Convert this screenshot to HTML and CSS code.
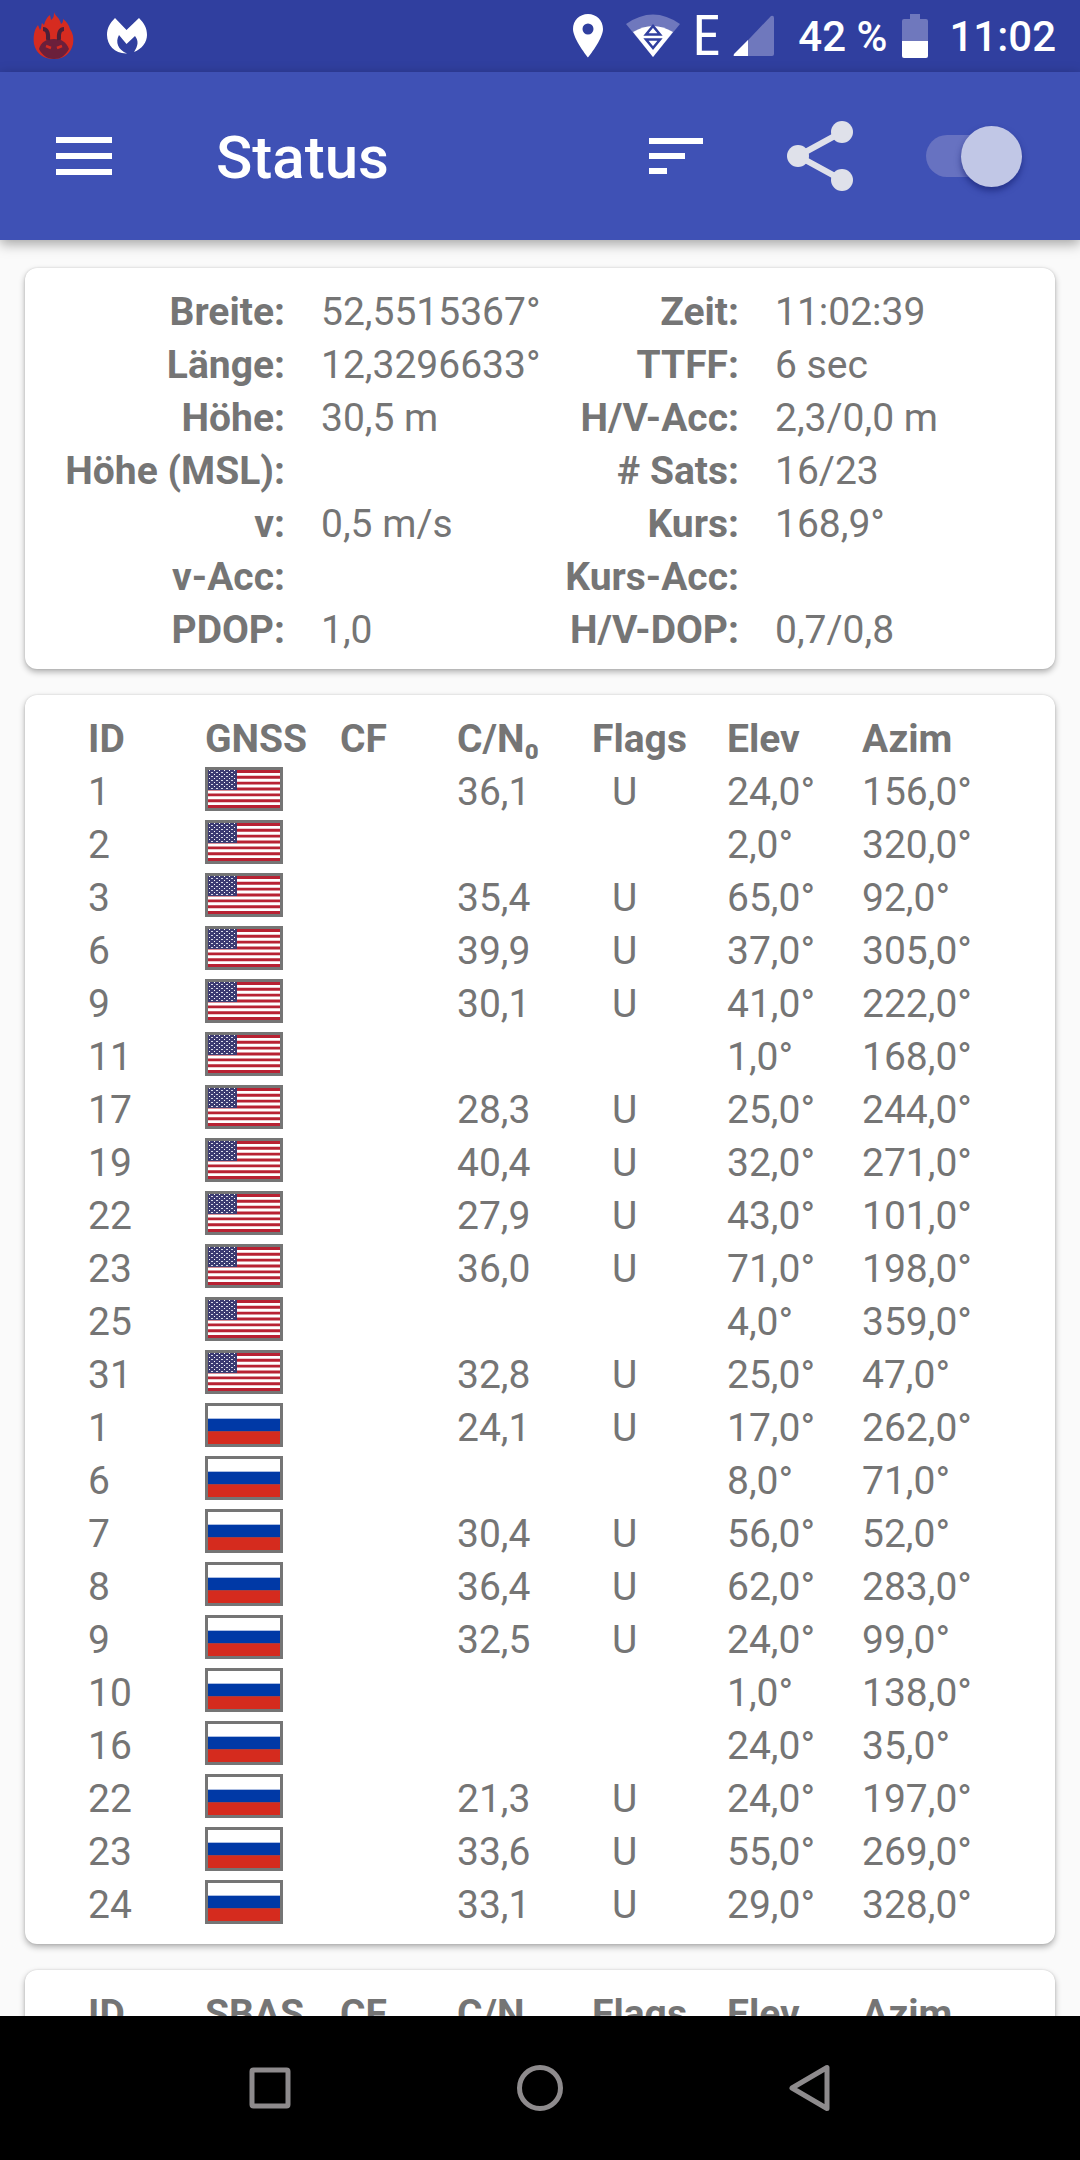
FILE: index.html
```html
<!DOCTYPE html>
<html lang="de">
<head>
<meta charset="utf-8">
<meta name="viewport" content="width=device-width, initial-scale=1">
<title>Status</title>
<link rel="stylesheet" href="styles.css">
</head>
<body>
<svg class="defs" aria-hidden="true">
  <defs>
    <pattern id="stars" width="5" height="4" patternUnits="userSpaceOnUse">
      <rect x="1" y="1" width="2" height="1" fill="#d8d8e6"/>
      <rect x="4" y="3" width="1" height="1" fill="#ffffff"/>
    </pattern>
    <symbol id="us" viewBox="0 0 78 44">
      <rect width="78" height="44" fill="#757575"/>
      <rect x="3" y="3" width="72" height="38" fill="#fff"/>
      <path d="M3 4.46h72M3 10.31h72M3 16.15h72M3 22h72M3 27.85h72M3 33.69h72M3 39.54h72" stroke="#b82233" stroke-width="2.92"/>
      <rect x="3" y="3" width="29" height="20" fill="#3c3b72"/>
      <rect x="3" y="3" width="28" height="20" fill="url(#stars)"/>
    </symbol>
    <symbol id="ru" viewBox="0 0 78 44">
      <rect width="78" height="44" fill="#757575"/>
      <rect x="3" y="3" width="72" height="13" fill="#fff"/>
      <rect x="3" y="15.67" width="72" height="12.67" fill="#0039a6"/>
      <rect x="3" y="28.33" width="72" height="12.67" fill="#d52b1e"/>
    </symbol>
  </defs>
</svg>
<div class="screen">
  <div class="statusbar">
    <div class="notifications">
      <svg width="42" height="48" viewBox="0 0 42 48" aria-hidden="true">
        <path d="M21 0C22 4 27 6 28 12C30 11 30 9 30 7C34 10 36 13 37 17C40 21 41 26 40 32C38 41 31 47 21 47C10 47 3 41 1 32C0 25 1 18 5 13L7 18C9 15 8 13 9 11L11 13C12 9 14 5 17 3L18 8C21 6 21 3 21 0Z" fill="#d62b20"/>
        <path d="M6 37C8 30 13 27 21 27C29 27 33 30 36 37C32 44 27 47 21 47C14 47 9 43 6 37Z" fill="#6b1f3b"/>
        <path d="M10 17q6 0 5 11M31 17q-6 0-5 11" fill="none" stroke="#4c2038" stroke-width="4"/>
        <path d="M13 34l5 2M29 34l-5 2" stroke="#d62b20" stroke-width="2.500"/>
      </svg>
      <svg width="42" height="38" viewBox="0 0 42 38" aria-hidden="true">
        <path d="M9 1L20.500 13L33 1C38 6 41 11 41 18C41 25 36 32 28 35C32 29 33 24 29 19L20.500 27L13 18C9 25 12 33 21 36.500C9 37 1 28 1 18C1 11 4 6 9 1Z" fill="#fff"/>
      </svg>
    </div>
    <div class="indicators">
      <svg class="pin" width="30" height="44" viewBox="0 0 30 44" aria-hidden="true">
        <path fill-rule="evenodd" d="M15 0C6.500 0 0 6.500 0 15C0 25 15 43.500 15 43.500S30 25 30 15C30 6.500 23.500 0 15 0ZM15 9.500a5.500 5.500 0 1 1 0 11a5.500 5.500 0 1 1 0-11Z" fill="#fff"/>
      </svg>
      <svg class="wifi" width="54" height="44" viewBox="0 0 54 44" aria-hidden="true">
        <path d="M27 43L0 10Q27-9 54 10Z" fill="#6f78bd"/>
        <path d="M27 43L7 18Q27 6 47 18Z" fill="#fff"/>
        <path d="M27 12L20 20.500H34ZM27 34L20 25.500H34Z" fill="#fff" stroke="#303f9f" stroke-width="2.500"/>
      </svg>
      <span class="network">E</span>
      <svg class="signal" width="41" height="42" viewBox="0 0 41 42" aria-hidden="true">
        <path d="M0 41L38 1Q41 0 41 3V39Q41 41 39 41Z" fill="#6f78bd"/>
        <path d="M15 25V41H2Q0 41 1 39Z" fill="#fff"/>
      </svg>
      <span class="percent">42 %</span>
      <svg class="battery" width="26" height="44" viewBox="0 0 26 44" aria-hidden="true">
        <path d="M8 0H18V5H24Q26 5 26 7V28H0V7Q0 5 2 5H8Z" fill="#6f78bd"/>
        <path d="M0 27H26V42Q26 44 24 44H2Q0 44 0 42Z" fill="#fff"/>
      </svg>
      <time>11:02</time>
    </div>
  </div>

  <header class="appbar">
    <button class="icon-button" type="button" aria-label="Menü">
      <svg width="56" height="38" viewBox="0 0 56 38"><path d="M0 3H56M0 19H56M0 35H56" stroke="#fff" stroke-width="6"/></svg>
    </button>
    <h1>Status</h1>
    <div class="actions">
      <button class="icon-button" type="button" aria-label="Sortieren">
        <svg width="54" height="36" viewBox="0 0 54 36"><path d="M0 3H54M0 18H36M0 33H18" stroke="#fff" stroke-width="6"/></svg>
      </button>
      <button class="icon-button" type="button" aria-label="Teilen">
        <svg width="68" height="72" viewBox="0 0 68 72">
          <path d="M56 12L12 36L56 60" fill="none" stroke="#dfe1ea" stroke-width="6"/>
          <g fill="#dfe1ea"><circle cx="56" cy="12" r="11"/><circle cx="12" cy="36" r="11"/><circle cx="56" cy="60" r="11"/></g>
        </svg>
      </button>
      <input class="switch" type="checkbox" role="switch" aria-label="GPS" checked>
    </div>
  </header>

  <main class="content">
    <section class="card">
      <table class="position">
        <colgroup><col class="p1"><col class="p2"><col class="p3"><col class="p4"></colgroup>
        <tbody>
        <tr><th>Breite:</th><td>52,5515367°</td><th>Zeit:</th><td>11:02:39</td></tr>
        <tr><th>Länge:</th><td>12,3296633°</td><th>TTFF:</th><td>6 sec</td></tr>
        <tr><th>Höhe:</th><td>30,5 m</td><th>H/V-Acc:</th><td>2,3/0,0 m</td></tr>
        <tr><th>Höhe (MSL):</th><td></td><th># Sats:</th><td>16/23</td></tr>
        <tr><th>v:</th><td>0,5 m/s</td><th>Kurs:</th><td>168,9°</td></tr>
        <tr><th>v-Acc:</th><td></td><th>Kurs-Acc:</th><td></td></tr>
        <tr><th>PDOP:</th><td>1,0</td><th>H/V-DOP:</th><td>0,7/0,8</td></tr>
        </tbody>
      </table>
    </section>

    <section class="card">
      <table class="sats">
        <colgroup><col class="narrow"><col class="wide"><col class="narrow"><col class="wide"><col class="wide"><col class="wide"><col class="wide"></colgroup>
        <thead>
        <tr><th>ID</th><th>GNSS</th><th>CF</th><th>C/N₀</th><th>Flags</th><th>Elev</th><th>Azim</th></tr>
        </thead>
        <tbody>
        <tr><td>1</td><td><svg class="flag"><use href="#us"/></svg></td><td></td><td>36,1</td><td class="used">U</td><td>24,0°</td><td>156,0°</td></tr>
        <tr><td>2</td><td><svg class="flag"><use href="#us"/></svg></td><td></td><td></td><td></td><td>2,0°</td><td>320,0°</td></tr>
        <tr><td>3</td><td><svg class="flag"><use href="#us"/></svg></td><td></td><td>35,4</td><td class="used">U</td><td>65,0°</td><td>92,0°</td></tr>
        <tr><td>6</td><td><svg class="flag"><use href="#us"/></svg></td><td></td><td>39,9</td><td class="used">U</td><td>37,0°</td><td>305,0°</td></tr>
        <tr><td>9</td><td><svg class="flag"><use href="#us"/></svg></td><td></td><td>30,1</td><td class="used">U</td><td>41,0°</td><td>222,0°</td></tr>
        <tr><td>11</td><td><svg class="flag"><use href="#us"/></svg></td><td></td><td></td><td></td><td>1,0°</td><td>168,0°</td></tr>
        <tr><td>17</td><td><svg class="flag"><use href="#us"/></svg></td><td></td><td>28,3</td><td class="used">U</td><td>25,0°</td><td>244,0°</td></tr>
        <tr><td>19</td><td><svg class="flag"><use href="#us"/></svg></td><td></td><td>40,4</td><td class="used">U</td><td>32,0°</td><td>271,0°</td></tr>
        <tr><td>22</td><td><svg class="flag"><use href="#us"/></svg></td><td></td><td>27,9</td><td class="used">U</td><td>43,0°</td><td>101,0°</td></tr>
        <tr><td>23</td><td><svg class="flag"><use href="#us"/></svg></td><td></td><td>36,0</td><td class="used">U</td><td>71,0°</td><td>198,0°</td></tr>
        <tr><td>25</td><td><svg class="flag"><use href="#us"/></svg></td><td></td><td></td><td></td><td>4,0°</td><td>359,0°</td></tr>
        <tr><td>31</td><td><svg class="flag"><use href="#us"/></svg></td><td></td><td>32,8</td><td class="used">U</td><td>25,0°</td><td>47,0°</td></tr>
        <tr><td>1</td><td><svg class="flag"><use href="#ru"/></svg></td><td></td><td>24,1</td><td class="used">U</td><td>17,0°</td><td>262,0°</td></tr>
        <tr><td>6</td><td><svg class="flag"><use href="#ru"/></svg></td><td></td><td></td><td></td><td>8,0°</td><td>71,0°</td></tr>
        <tr><td>7</td><td><svg class="flag"><use href="#ru"/></svg></td><td></td><td>30,4</td><td class="used">U</td><td>56,0°</td><td>52,0°</td></tr>
        <tr><td>8</td><td><svg class="flag"><use href="#ru"/></svg></td><td></td><td>36,4</td><td class="used">U</td><td>62,0°</td><td>283,0°</td></tr>
        <tr><td>9</td><td><svg class="flag"><use href="#ru"/></svg></td><td></td><td>32,5</td><td class="used">U</td><td>24,0°</td><td>99,0°</td></tr>
        <tr><td>10</td><td><svg class="flag"><use href="#ru"/></svg></td><td></td><td></td><td></td><td>1,0°</td><td>138,0°</td></tr>
        <tr><td>16</td><td><svg class="flag"><use href="#ru"/></svg></td><td></td><td></td><td></td><td>24,0°</td><td>35,0°</td></tr>
        <tr><td>22</td><td><svg class="flag"><use href="#ru"/></svg></td><td></td><td>21,3</td><td class="used">U</td><td>24,0°</td><td>197,0°</td></tr>
        <tr><td>23</td><td><svg class="flag"><use href="#ru"/></svg></td><td></td><td>33,6</td><td class="used">U</td><td>55,0°</td><td>269,0°</td></tr>
        <tr><td>24</td><td><svg class="flag"><use href="#ru"/></svg></td><td></td><td>33,1</td><td class="used">U</td><td>29,0°</td><td>328,0°</td></tr>
        </tbody>
      </table>
    </section>

    <section class="card">
      <table class="sats">
        <colgroup><col class="narrow"><col class="wide"><col class="narrow"><col class="wide"><col class="wide"><col class="wide"><col class="wide"></colgroup>
        <thead>
        <tr><th>ID</th><th>SBAS</th><th>CF</th><th>C/N₀</th><th>Flags</th><th>Elev</th><th>Azim</th></tr>
        </thead>
      </table>
    </section>
  </main>

  <nav class="navbar">
    <button type="button" aria-label="Übersicht">
      <svg width="48" height="48" viewBox="0 0 48 48"><rect x="6" y="6" width="36" height="36" rx="1.500"/></svg>
    </button>
    <button type="button" aria-label="Startseite">
      <svg width="48" height="48" viewBox="0 0 48 48"><circle cx="24" cy="24" r="20.500"/></svg>
    </button>
    <button type="button" aria-label="Zurück">
      <svg width="48" height="48" viewBox="0 0 48 48"><path d="M6 24L41 3.500V44.500Z"/></svg>
    </button>
  </nav>
</div>
</body>
</html>
```
FILE: styles.css
```css
* { box-sizing: border-box; }

body {
  margin: 0;
  background: #fafafa;
  color: #757575;
  font-family: Roboto, "Liberation Sans", sans-serif;
  font-size: 39px;
  line-height: 53px;
}

svg { display: block; flex: none; }

.defs { position: absolute; width: 0; height: 0; }

button {
  padding: 0;
  border: 0;
  background: none;
  cursor: pointer;
}

.screen {
  display: flex;
  flex-direction: column;
  height: 100vh;
}

/* System status bar */
.statusbar {
  display: flex;
  flex: none;
  justify-content: space-between;
  align-items: center;
  height: 72px;
  padding: 0 24px 0 33px;
  background: #303f9f;
  color: #fff;
  font-size: 42px;
  font-weight: 500;
}

.notifications,
.indicators {
  display: flex;
  align-items: center;
}

.notifications { gap: 31px; }

.pin { margin-right: 23px; }
.wifi { margin-right: 12px; }
.network {
  margin-right: 13px;
  font-family: "Liberation Sans Narrow", "Roboto Condensed", Roboto, sans-serif;
  font-size: 56px;
  font-weight: 400;
}
.signal { margin-right: 24px; }
.percent { margin-right: 15px; }
.battery { margin-right: 21px; }

/* App bar */
.appbar {
  display: flex;
  flex: none;
  align-items: center;
  height: 168px;
  padding: 0 58px 0 56px;
  background: #3f51b5;
  color: #fff;
  box-shadow: 0 4px 12px rgba(0, 0, 0, 0.35);
  z-index: 1;
}

h1 {
  flex: 1;
  margin: 0 0 0 104px;
  padding-top: 4px;
  font-size: 60px;
  font-weight: 500;
  line-height: 72px;
}

.actions {
  display: flex;
  align-items: center;
}

.actions .icon-button { margin-right: 83px; }
.actions .icon-button + .icon-button { margin-right: 72px; }

.switch {
  appearance: none;
  display: flex;
  justify-content: flex-end;
  align-items: center;
  width: 96px;
  height: 42px;
  margin: 0;
  border-radius: 21px;
  background: #6772c1;
}

.switch::before {
  content: "";
  flex: none;
  width: 61px;
  height: 61px;
  border-radius: 50%;
  background: #c1c7e6;
  box-shadow: 0 4px 6px rgba(20, 30, 110, 0.6);
}

.switch:not(:checked) { justify-content: flex-start; }

/* Cards */
.content {
  display: flex;
  flex: 1;
  flex-direction: column;
  gap: 26px;
  min-height: 0;
  padding: 28px 25px 25px;
  overflow-y: auto;
  scrollbar-width: none;
}

.card {
  flex: none;
  padding: 18px 0 12px;
  border-radius: 12px;
  background: #fff;
  box-shadow: 0 3px 6px rgba(0, 0, 0, 0.3), 0 0 2px rgba(0, 0, 0, 0.15);
}

table {
  width: 100%;
  border-collapse: collapse;
  table-layout: fixed;
}

th,
td {
  height: 53px;
  padding: 0;
  text-align: left;
  vertical-align: top;
  white-space: nowrap;
}

th { font-weight: 700; }

.p1 { width: 260px; }
.p2 { width: 254px; }
.p3 { width: 200px; }
.p4 { width: 316px; }

.position th { text-align: right; }
.position td { padding-left: 36px; }

.card:has(.sats) { padding-right: 58px; padding-left: 63px; }

.narrow { width: 117px; }
.wide { width: 135px; }

.sats .used { padding-left: 20px; }

.flag {
  width: 78px;
  height: 44px;
  margin: 1px 0 8px;
}

/* System navigation */
.navbar {
  display: flex;
  flex: none;
  justify-content: center;
  align-items: center;
  height: 144px;
  background: #000;
  z-index: 1;
}

.navbar button {
  flex: 0 1 25%;
  display: flex;
  justify-content: center;
}

.navbar svg {
  fill: none;
  stroke: #8e8b8d;
  stroke-width: 5px;
  stroke-linejoin: round;
}
```
